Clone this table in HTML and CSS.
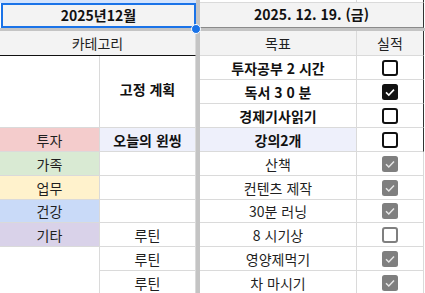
FILE: index.html
```html
<!DOCTYPE html>
<html lang="ko">
<head>
<meta charset="utf-8">
<title>2025년12월</title>
<link rel="stylesheet" href="styles.css">
</head>
<body>
<div class="sheet">
  <div class="strip-left"></div>
  <div class="strip-cell cc"></div>
  <div class="strip-cell cd"></div>

  <div class="c month">2025년12월</div>
  <div class="c date">2025. 12. 19. (금)</div>

  <div class="freeze-v"></div>
  <div class="freeze-h"></div>

  <div class="c head head-left">카테고리</div>
  <div class="c head cc r0">목표</div>
  <div class="c head cd r0 dark-right">실적</div>

  <div class="c ca span-a1"></div>
  <div class="c cb span-b1 bold fixed">고정 계획</div>

  <div class="c ca r4 pink">투자</div>
  <div class="c cb r4 lav bold">오늘의 윈씽</div>
  <div class="c ca r5 green">가족</div>
  <div class="c cb r5"></div>
  <div class="c ca r6 yellow">업무</div>
  <div class="c cb r6"></div>
  <div class="c ca r7 blue">건강</div>
  <div class="c cb r7"></div>
  <div class="c ca r8 purple">기타</div>
  <div class="c cb r8">루틴</div>
  <div class="c ca span-a9"></div>
  <div class="c cb r9">루틴</div>
  <div class="c cb r10">루틴</div>

  <div class="c cc r1 bold">투자공부 2 시간</div>
  <div class="c cd r1 dark-right"><svg class="box" viewBox="0 0 16 16"><rect x="1" y="1" width="14" height="14" rx="2" fill="#fff" stroke="#111" stroke-width="2"/></svg></div>
  <div class="c cc r2 bold">독서 3 0 분</div>
  <div class="c cd r2 dark-right"><svg class="box" viewBox="0 0 16 16"><rect x="0" y="0" width="16" height="16" rx="2.5" fill="#111"/><path d="M4 8.3 L6.8 11 L12 5.6" fill="none" stroke="#fff" stroke-width="1.6"/></svg></div>
  <div class="c cc r3 bold">경제기사읽기</div>
  <div class="c cd r3 dark-right"><svg class="box" viewBox="0 0 16 16"><rect x="1" y="1" width="14" height="14" rx="2" fill="#fff" stroke="#111" stroke-width="2"/></svg></div>
  <div class="c cc r4 bold lav">강의2개</div>
  <div class="c cd r4 dark-right"><svg class="box" viewBox="0 0 16 16"><rect x="1" y="1" width="14" height="14" rx="2" fill="#fff" stroke="#111" stroke-width="2"/></svg></div>

  <div class="c cc r5">산책</div>
  <div class="c cd r5"><svg class="box" viewBox="0 0 16 16"><rect x="0" y="0" width="16" height="16" rx="2.5" fill="#7f7f7f"/><path d="M4 8.3 L6.8 11 L12 5.6" fill="none" stroke="#e6e6e6" stroke-width="1.5"/></svg></div>
  <div class="c cc r6">컨텐츠 제작</div>
  <div class="c cd r6"><svg class="box" viewBox="0 0 16 16"><rect x="0" y="0" width="16" height="16" rx="2.5" fill="#7f7f7f"/><path d="M4 8.3 L6.8 11 L12 5.6" fill="none" stroke="#e6e6e6" stroke-width="1.5"/></svg></div>
  <div class="c cc r7">30분 러닝</div>
  <div class="c cd r7"><svg class="box" viewBox="0 0 16 16"><rect x="0" y="0" width="16" height="16" rx="2.5" fill="#7f7f7f"/><path d="M4 8.3 L6.8 11 L12 5.6" fill="none" stroke="#e6e6e6" stroke-width="1.5"/></svg></div>
  <div class="c cc r8">8 시기상</div>
  <div class="c cd r8"><svg class="box" viewBox="0 0 16 16"><rect x="1" y="1" width="14" height="14" rx="2" fill="#fff" stroke="#7f7f7f" stroke-width="2"/></svg></div>
  <div class="c cc r9">영양제먹기</div>
  <div class="c cd r9"><svg class="box" viewBox="0 0 16 16"><rect x="0" y="0" width="16" height="16" rx="2.5" fill="#7f7f7f"/><path d="M4 8.3 L6.8 11 L12 5.6" fill="none" stroke="#e6e6e6" stroke-width="1.5"/></svg></div>
  <div class="c cc r10">차 마시기</div>
  <div class="c cd r10"><svg class="box" viewBox="0 0 16 16"><rect x="0" y="0" width="16" height="16" rx="2.5" fill="#7f7f7f"/><path d="M4 8.3 L6.8 11 L12 5.6" fill="none" stroke="#e6e6e6" stroke-width="1.5"/></svg></div>

  <div class="handle"></div>
</div>
</body>
</html>
```
FILE: styles.css
```css
* {
  box-sizing: border-box;
  margin: 0;
  padding: 0;
}

body {
  margin: 0;
  background: #fff;
  font-family: "Noto Sans CJK KR", "Noto Sans", sans-serif;
  font-size: 14px;
  color: #1f1f1f;
}

.sheet {
  position: relative;
  display: grid;
  grid-template-columns: 100px 96px 4px 157px 67px 1px;
  grid-template-rows: 3px 25px 3px 25px 24px 24px 24px 24px 24px 24px 23px 24px 24px 24px;
  width: 425px;
  height: 293px;
  overflow: hidden;
}

.c {
  display: flex;
  align-items: center;
  justify-content: center;
  border-right: 1px solid #dadada;
  border-bottom: 1px solid #dadada;
  white-space: nowrap;
  line-height: 1;
  background: #fff;
}

.bold { font-weight: 700; color: #111; }

.ca { grid-column: 1; }
.cb { grid-column: 2; }
.cc { grid-column: 4; }
.cd { grid-column: 5; }

.r0 { grid-row: 4; }
.r1 { grid-row: 5; }
.r2 { grid-row: 6; }
.r3 { grid-row: 7; }
.r4 { grid-row: 8; }
.r5 { grid-row: 9; }
.r6 { grid-row: 10; }
.r7 { grid-row: 11; }
.r8 { grid-row: 12; }
.r9 { grid-row: 13; }
.r10 { grid-row: 14; }

.strip-left {
  grid-column: 1 / 3;
  grid-row: 1;
  background: #d3e3fd;
}

.strip-cell {
  grid-row: 1;
  border-right: 1px solid #dadada;
  border-bottom: 1px solid #dadada;
}

.strip-cell.cd { border-right-color: #333; }

.month {
  grid-column: 1 / 3;
  grid-row: 2;
  background: #f3f3f3;
  border: 2px solid #1a73e8;
  margin-left: 1px;
  font-weight: 700;
  color: #111;
  padding-bottom: 1px;
}

.date {
  grid-column: 4 / 6;
  grid-row: 2;
  background: #f3f3f3;
  font-weight: 700;
  color: #111;
  border-right-color: #333;
  border-bottom-color: #8a8a8a;
  padding-bottom: 2px;
}

.freeze-v {
  grid-column: 3;
  grid-row: 1 / -1;
  background: #c4c4c4;
}

.freeze-h {
  grid-column: 1 / -1;
  grid-row: 3;
  background: #c4c4c4;
}

.head {
  background: #f3f3f3;
  padding-bottom: 1px;
}

.head-left {
  grid-column: 1 / 3;
  grid-row: 4;
  border-bottom-color: #111;
}

.span-a1 {
  grid-column: 1;
  grid-row: 5 / 8;
}

.span-b1 {
  grid-column: 2;
  grid-row: 5 / 8;
}

.fixed { padding-bottom: 6px; }

.span-a9 {
  grid-column: 1;
  grid-row: 13 / 15;
}

.dark-right { border-right-color: #333; }

.pink { background: #f4cccc; }
.green { background: #d9ead3; }
.yellow { background: #fff2cc; }
.blue { background: #c9daf8; }
.purple { background: #d9d2e9; }
.lav { background: #eef0fb; }

.box {
  width: 16px;
  height: 16px;
  display: block;
}

.handle {
  position: absolute;
  left: 191px;
  top: 24px;
  width: 10px;
  height: 10px;
  border-radius: 50%;
  background: #1a73e8;
  border: 1px solid #fff;
}
```
